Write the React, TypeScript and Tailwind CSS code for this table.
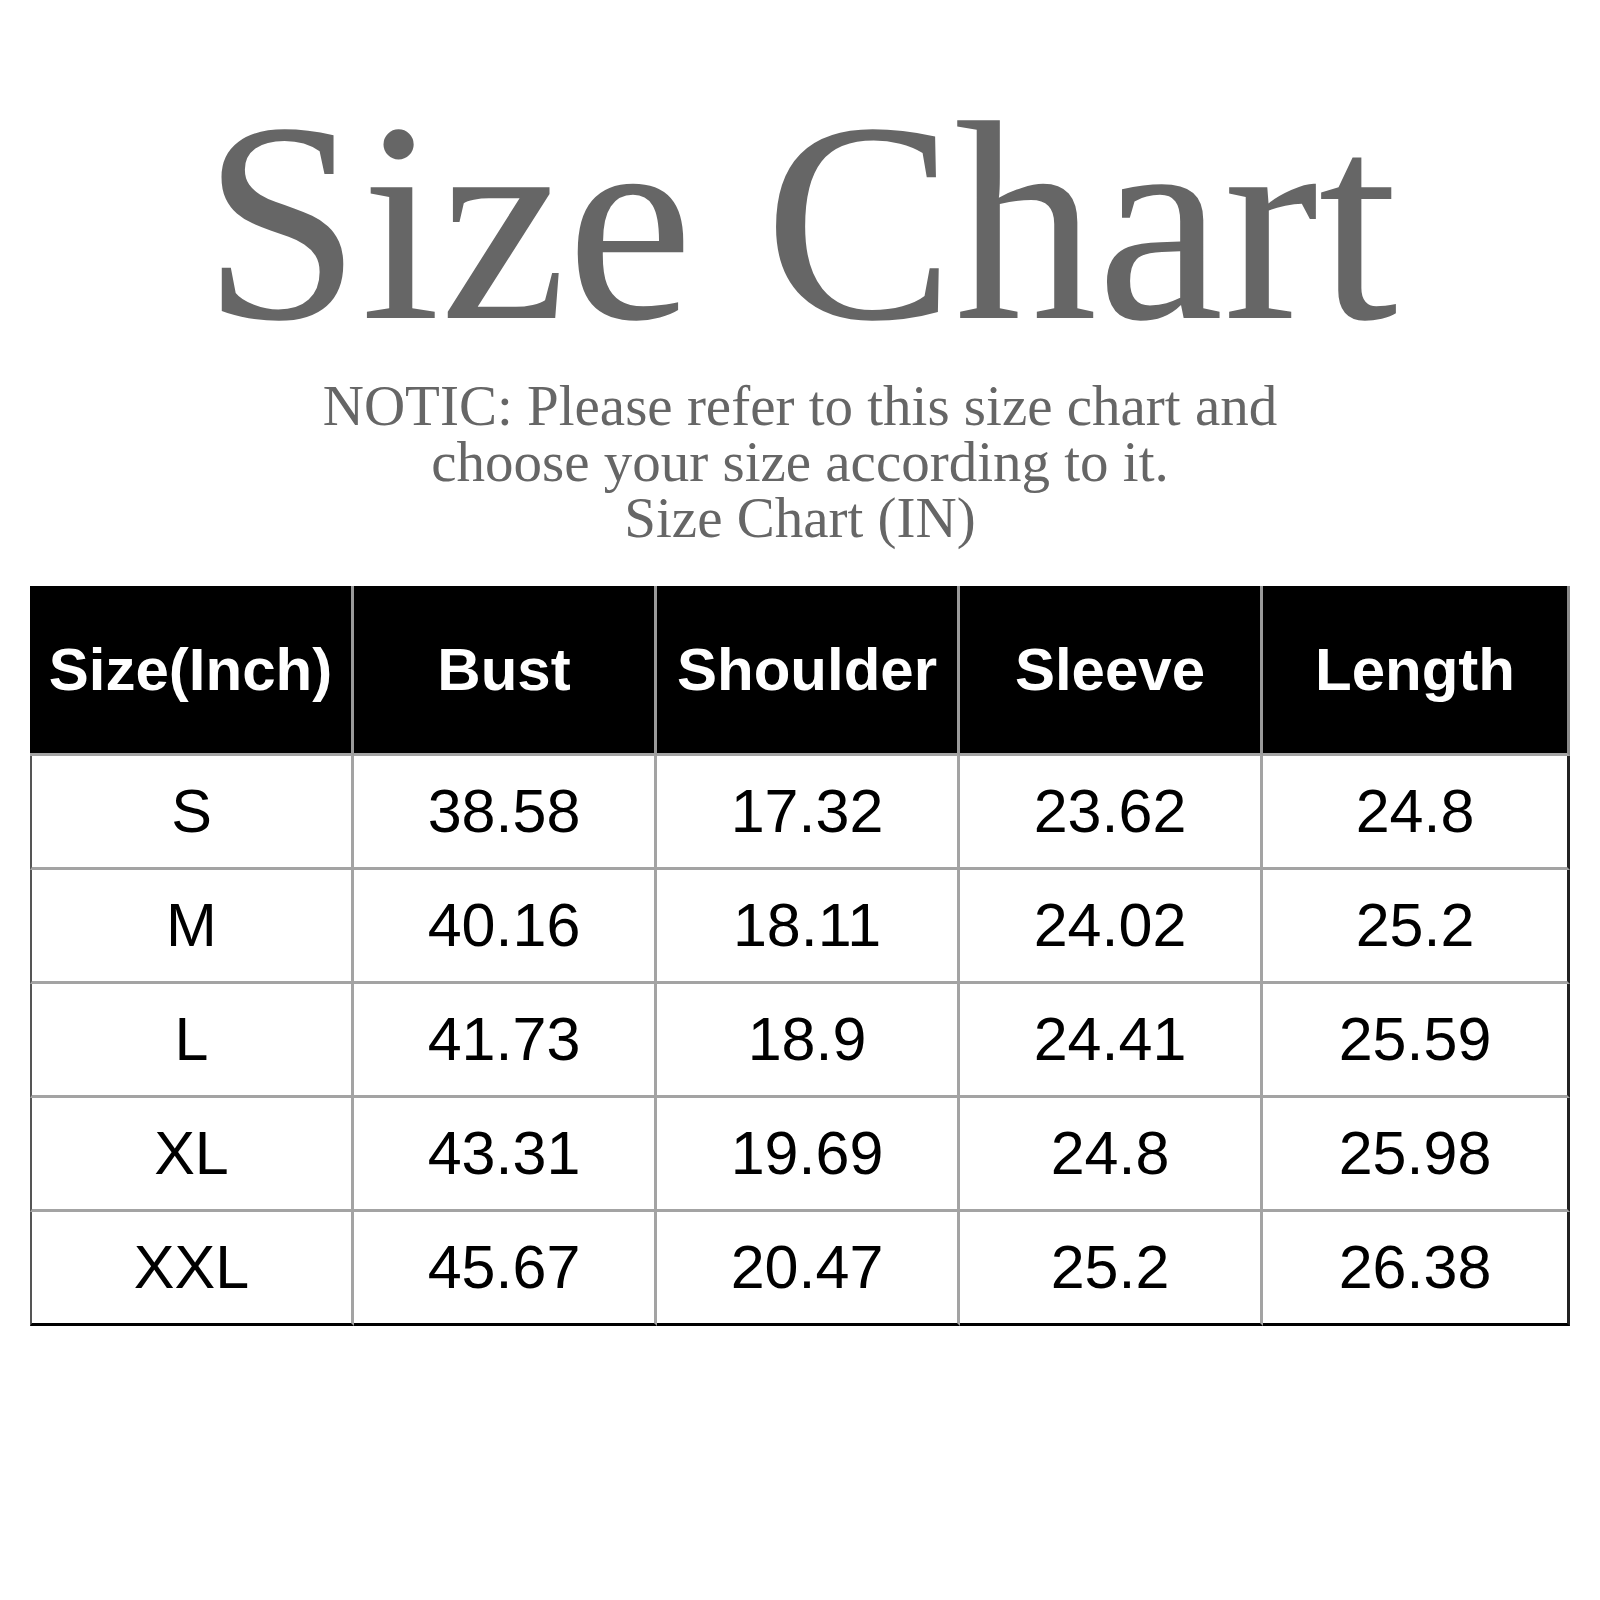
const headers = ["Size(Inch)", "Bust", "Shoulder", "Sleeve", "Length"];

const rows: string[][] = [
  ["S", "38.58", "17.32", "23.62", "24.8"],
  ["M", "40.16", "18.11", "24.02", "25.2"],
  ["L", "41.73", "18.9", "24.41", "25.59"],
  ["XL", "43.31", "19.69", "24.8", "25.98"],
  ["XXL", "45.67", "20.47", "25.2", "26.38"],
];

export default function App() {
  return (
    <div className="w-[1600px] h-[1600px] bg-white">
      <div className="pt-[80px] text-center text-[#666666] font-['Liberation_Serif',serif]">
        <h1 className="text-[285px] leading-[285px]">Size Chart</h1>
        <div className="mt-[13px] text-[57px] leading-[56px]">
          <p>NOTIC: Please refer to this size chart and</p>
          <p>choose your size according to it.</p>
          <p>Size Chart (IN)</p>
        </div>
      </div>

      <div className="ml-[30px] mt-[40px] w-[1540px] grid grid-cols-[324px_303px_303px_303px_307px] font-['Liberation_Sans',Arial,sans-serif]">
        {headers.map((h, i) => (
          <div
            key={h}
            className={
              "h-[170px] bg-black text-white font-bold text-[60px] flex items-center justify-center border-b-[3px] border-b-[#a3a3a3] " +
              (i === 4 ? "border-r-[3px] border-r-[#8a8a8a]" : "border-r-[3px] border-r-[#9a9a9a]")
            }
          >
            {h}
          </div>
        ))}
        {rows.map((r, ri) =>
          r.map((cell, ci) => {
            const last = ri === rows.length - 1;
            return (
              <div
                key={ri + "-" + ci}
                className={
                  "h-[114px] flex items-center justify-center text-[61px] text-black " +
                  (ci === 0 ? "border-l-2 border-l-[#555555] " : "") +
                  (ci === 4 ? "border-r-[3px] border-r-[#222222] " : "border-r-[3px] border-r-[#a3a3a3] ") +
                  (last ? "border-b-[3px] border-b-black" : "border-b-[3px] border-b-[#a3a3a3]")
                }
              >
                {cell}
              </div>
            );
          })
        )}
      </div>
    </div>
  );
}
